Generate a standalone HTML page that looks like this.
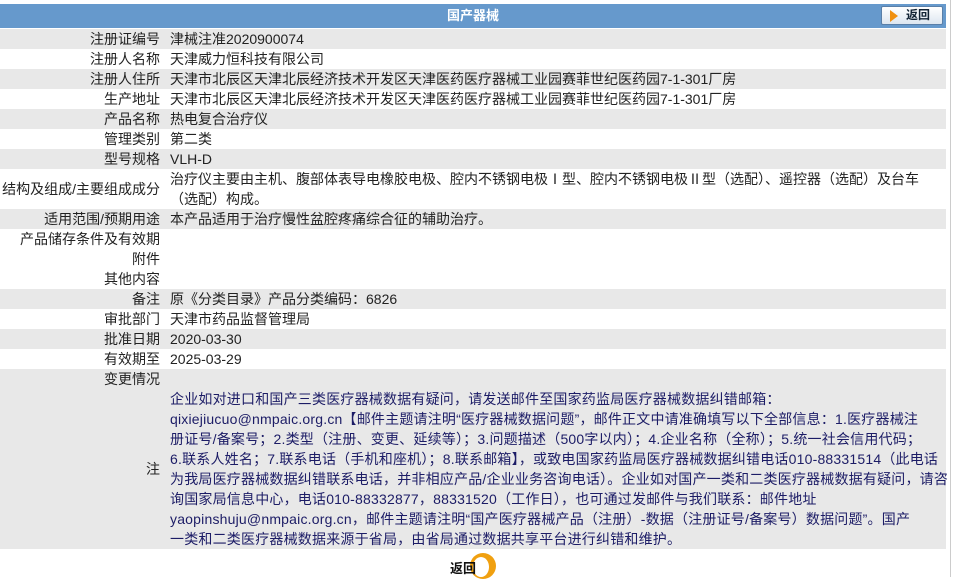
<!DOCTYPE html>
<html><head><meta charset="utf-8"><style>
body{margin:0;background:#fff;font-family:"Liberation Sans","Noto Sans CJK SC",sans-serif;font-size:14px;color:#222;width:954px;height:577px;overflow:hidden;position:relative}
.hdr{position:absolute;left:0;top:4px;width:946px;height:24px;background:#6699cc;color:#fff;font-weight:bold;text-align:center;line-height:24px;font-size:13px}
.btn{position:absolute;left:881px;top:6px;width:62px;height:19px;border:1px solid #5a7fa8;border-radius:2px;background:linear-gradient(#fff,#dde6f0);box-sizing:border-box;color:#123;font-weight:bold;font-size:12px;line-height:17px;padding-left:24px}
.btn:before{content:"";position:absolute;left:8px;top:3px;width:0;height:0;border-left:8px solid #f09010;border-top:6px solid transparent;border-bottom:6px solid transparent}
.row{position:absolute;left:0;width:946px;height:20px;line-height:20px}
.g{background:#e8e8e8}
.l{position:absolute;right:786px;white-space:nowrap;text-align:right}
.v{position:absolute;left:170px;white-space:nowrap}
.note{color:#1c1c66;letter-spacing:0.2px}
.scr{position:absolute;left:950px;top:0;width:1px;height:577px;background:#ccc}
.b2{position:absolute;left:470px;top:553px;width:26px;height:26px;border-radius:50%;background:#f0a010}
.b2:after{content:"";position:absolute;left:3px;top:4px;width:16px;height:20px;border-radius:50%;background:#fff}
.b2t{position:absolute;left:450px;top:558px;font-weight:bold;font-size:13px;color:#111}
</style></head><body>
<div class="scr"></div>
<div class="hdr">国产器械</div>
<div class="btn">返回</div>
<div class="row g" style="top:29px"><span class="l">注册证编号</span><span class="v">津械注准2020900074</span></div>
<div class="row" style="top:49px"><span class="l">注册人名称</span><span class="v">天津威力恒科技有限公司</span></div>
<div class="row g" style="top:69px"><span class="l">注册人住所</span><span class="v">天津市北辰区天津北辰经济技术开发区天津医药医疗器械工业园赛菲世纪医药园7-1-301厂房</span></div>
<div class="row" style="top:89px"><span class="l">生产地址</span><span class="v">天津市北辰区天津北辰经济技术开发区天津医药医疗器械工业园赛菲世纪医药园7-1-301厂房</span></div>
<div class="row g" style="top:109px"><span class="l">产品名称</span><span class="v">热电复合治疗仪</span></div>
<div class="row" style="top:129px"><span class="l">管理类别</span><span class="v">第二类</span></div>
<div class="row g" style="top:149px"><span class="l">型号规格</span><span class="v">VLH-D</span></div>
<div class="row" style="top:169px;height:40px"><span class="l" style="top:10px">结构及组成/主要组成成分</span><span class="v">治疗仪主要由主机、腹部体表导电橡胶电极、腔内不锈钢电极Ⅰ型、腔内不锈钢电极Ⅱ型（选配）、遥控器（选配）及台车<br>（选配）构成。</span></div>
<div class="row g" style="top:209px"><span class="l">适用范围/预期用途</span><span class="v">本产品适用于治疗慢性盆腔疼痛综合征的辅助治疗。</span></div>
<div class="row" style="top:229px"><span class="l">产品储存条件及有效期</span></div>
<div class="row" style="top:249px"><span class="l">附件</span></div>
<div class="row" style="top:269px"><span class="l">其他内容</span></div>
<div class="row g" style="top:289px"><span class="l">备注</span><span class="v">原《分类目录》产品分类编码：6826</span></div>
<div class="row" style="top:309px"><span class="l">审批部门</span><span class="v">天津市药品监督管理局</span></div>
<div class="row g" style="top:329px"><span class="l">批准日期</span><span class="v">2020-03-30</span></div>
<div class="row" style="top:349px"><span class="l">有效期至</span><span class="v">2025-03-29</span></div>
<div class="row g" style="top:369px"><span class="l">变更情况</span></div>
<div class="row g" style="top:389px;height:160px"><span class="l" style="top:70px">注</span><span class="v note">企业如对进口和国产三类医疗器械数据有疑问，请发送邮件至国家药监局医疗器械数据纠错邮箱：<br>qixiejiucuo@nmpaic.org.cn【邮件主题请注明“医疗器械数据问题”，邮件正文中请准确填写以下全部信息：1.医疗器械注<br>册证号/备案号；2.类型（注册、变更、延续等）；3.问题描述（500字以内）；4.企业名称（全称）；5.统一社会信用代码；<br>6.联系人姓名；7.联系电话（手机和座机）；8.联系邮箱】，或致电国家药监局医疗器械数据纠错电话010-88331514（此电话<br>为我局医疗器械数据纠错联系电话，并非相应产品/企业业务咨询电话）。企业如对国产一类和二类医疗器械数据有疑问，请咨<br>询国家局信息中心，电话010-88332877，88331520（工作日），也可通过发邮件与我们联系：邮件地址<br>yaopinshuju@nmpaic.org.cn，邮件主题请注明“国产医疗器械产品（注册）-数据（注册证号/备案号）数据问题”。国产<br>一类和二类医疗器械数据来源于省局，由省局通过数据共享平台进行纠错和维护。</span></div>
<div class="b2"></div>
<div class="b2t">返回</div>
</body></html>
